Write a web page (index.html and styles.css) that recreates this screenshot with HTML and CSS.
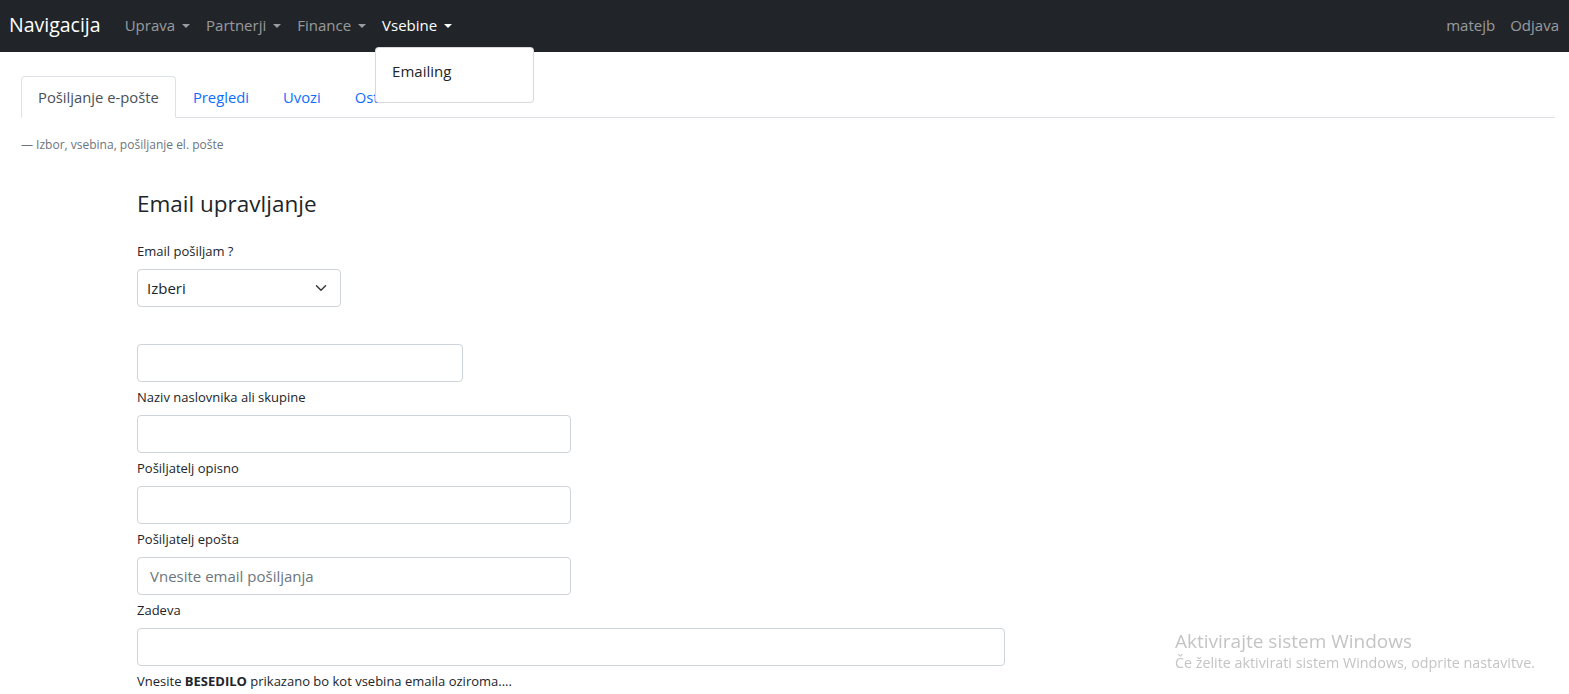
FILE: index.html
```html
<!DOCTYPE html>
<html lang="sl">
<head>
  <meta charset="UTF-8">
  <meta name="viewport" content="width=device-width, initial-scale=1.0">
  <title>Email upravljanje</title>
  <link rel="stylesheet" href="styles.css">
</head>
<body>
  <nav class="navbar">
    <a class="brand" href="#">Navigacija</a>
    <ul class="nav-left">
      <li><a class="nav-link toggle" href="#">Uprava</a></li>
      <li><a class="nav-link toggle" href="#">Partnerji</a></li>
      <li><a class="nav-link toggle" href="#">Finance</a></li>
      <li class="has-menu">
        <a class="nav-link toggle active" href="#">Vsebine</a>
        <div class="dropdown-menu">
          <a class="dropdown-item" href="#">Emailing</a>
        </div>
      </li>
    </ul>
    <ul class="nav-right">
      <li><a class="nav-link" href="#">matejb</a></li>
      <li><a class="nav-link" href="#">Odjava</a></li>
    </ul>
  </nav>

  <main class="page">
    <ul class="tabs">
      <li><a class="tab active" href="#">Pošiljanje e-pošte</a></li>
      <li><a class="tab" href="#">Pregledi</a></li>
      <li><a class="tab" href="#">Uvozi</a></li>
      <li><a class="tab" href="#">Ostalo</a></li>
    </ul>
    <p class="subtitle">— Izbor, vsebina, pošiljanje el. pošte</p>

    <form class="email-form">
      <h4 class="form-title">Email upravljanje</h4>

      <label class="form-label first" for="tip">Email pošiljam ?</label>
      <div class="select-wrap">
        <select id="tip" class="form-select">
          <option>Izberi</option>
        </select>
        <svg class="chevron" width="16" height="16" viewBox="0 0 16 16"><path d="M2 5l6 6 6-6" fill="none" stroke="#343a40" stroke-width="2" stroke-linecap="round" stroke-linejoin="round"/></svg>
      </div>

      <input class="form-control short" type="text">
      <label class="form-label">Naziv naslovnika ali skupine</label>
      <input class="form-control mid" type="text">
      <label class="form-label">Pošiljatelj opisno</label>
      <input class="form-control mid" type="text">
      <label class="form-label">Pošiljatelj epošta</label>
      <input class="form-control mid" type="text" placeholder="Vnesite email pošiljanja">
      <label class="form-label">Zadeva</label>
      <input class="form-control wide" type="text">
      <p class="form-label">Vnesite <b>BESEDILO</b> prikazano bo kot vsebina emaila oziroma....</p>
    </form>
  </main>

  <div class="watermark">
    <div class="wm-title">Aktivirajte sistem Windows</div>
    <div class="wm-text">Če želite aktivirati sistem Windows, odprite nastavitve.</div>
  </div>
</body>
</html>
```

FILE: styles.css
```css
* {
  box-sizing: border-box;
}

body {
  margin: 0;
  font-family: "Open Sans", "Noto Sans", Arial, sans-serif;
  font-size: 15px;
  line-height: 1.5;
  color: #212529;
  background: #fff;
  overflow: hidden;
  height: 694px;
}

a {
  text-decoration: none;
}

ul {
  list-style: none;
  margin: 0;
  padding: 0;
}

/* navbar */
.navbar {
  height: 52px;
  background: #212529;
  display: flex;
  align-items: center;
  padding: 0 9px;
}

.brand {
  color: #fff;
  font-size: 19.5px;
  margin-right: 16px;
  line-height: 1;
  padding-bottom: 2px;
}

.nav-left,
.nav-right {
  display: flex;
  align-items: center;
}

.nav-right {
  margin-left: auto;
}

.nav-left li {
  position: relative;
}

.nav-link {
  display: block;
  color: rgba(255, 255, 255, 0.55);
  padding: 6px 8px 8px;
  font-size: 15px;
}

.nav-right .nav-link {
  padding: 6px 1px 8px 14px;
}

.nav-link.active {
  color: #fff;
}

.toggle::after {
  content: "";
  display: inline-block;
  margin-left: 7px;
  vertical-align: 3px;
  border-top: 4.5px solid;
  border-left: 4px solid transparent;
  border-right: 4px solid transparent;
}

.dropdown-menu {
  position: absolute;
  top: 39px;
  left: 1px;
  width: 159px;
  padding: 8px 0;
  background: #fff;
  border: 1px solid rgba(0, 0, 0, 0.15);
  border-radius: 4px;
  z-index: 10;
}

.dropdown-item {
  display: block;
  padding: 1px 16px 9px;
  line-height: 28px;
  color: #212529;
  font-size: 15px;
}

/* page */
.page {
  padding: 24px 14px 0 21px;
}

.tabs {
  display: flex;
  border-bottom: 1px solid #dee2e6;
}

.tab {
  display: block;
  padding: 9px 16px 9px;
  margin-bottom: -1px;
  color: #0d6efd;
  border: 1px solid transparent;
  border-radius: 4px 4px 0 0;
  font-size: 14.8px;
}

.tab.active {
  color: #495057;
  background: #fff;
  border-color: #dee2e6 #dee2e6 #fff;
}

.subtitle {
  margin: 18px 0 0;
  font-size: 12px;
  color: #6c757d;
}

/* form */
.email-form {
  padding-left: 116px;
  display: flex;
  flex-direction: column;
  align-items: flex-start;
}

.form-title {
  margin: 36px 0 0;
  font-size: 22.5px;
  font-weight: 400;
  line-height: 1.2;
}

.form-label {
  display: block;
  font-size: 13px;
  line-height: 21px;
  margin: 5px 0 7px;
}

.form-label.first {
  margin-top: 24px;
}

.select-wrap {
  position: relative;
  width: 204px;
  margin-bottom: 37px;
}

.form-select {
  display: block;
  width: 100%;
  height: 38px;
  padding: 6px 36px 6px 9px;
  font-family: inherit;
  font-size: 15px;
  color: #212529;
  background: #fff;
  border: 1px solid #ced4da;
  border-radius: 4px;
  appearance: none;
}

.chevron {
  position: absolute;
  right: 14px;
  top: 13px;
  width: 12px;
  height: 12px;
  pointer-events: none;
}

.form-control {
  height: 38px;
  padding: 6px 12px;
  font-family: inherit;
  font-size: 15px;
  color: #212529;
  border: 1px solid #ced4da;
  border-radius: 4px;
}

.form-control::placeholder {
  color: #6c757d;
}

.short {
  width: 326px;
}

.mid {
  width: 434px;
}

.wide {
  width: 868px;
}

.form-label b {
  font-weight: 700;
}

/* windows overlay */
.watermark {
  position: fixed;
  left: 1175px;
  top: 629px;
  color: #c4c4c4;
  font-family: "Open Sans", "Noto Sans", sans-serif;
  line-height: 1.3;
}

.wm-title {
  font-size: 19px;
}

.wm-text {
  font-size: 14.3px;
}
```
